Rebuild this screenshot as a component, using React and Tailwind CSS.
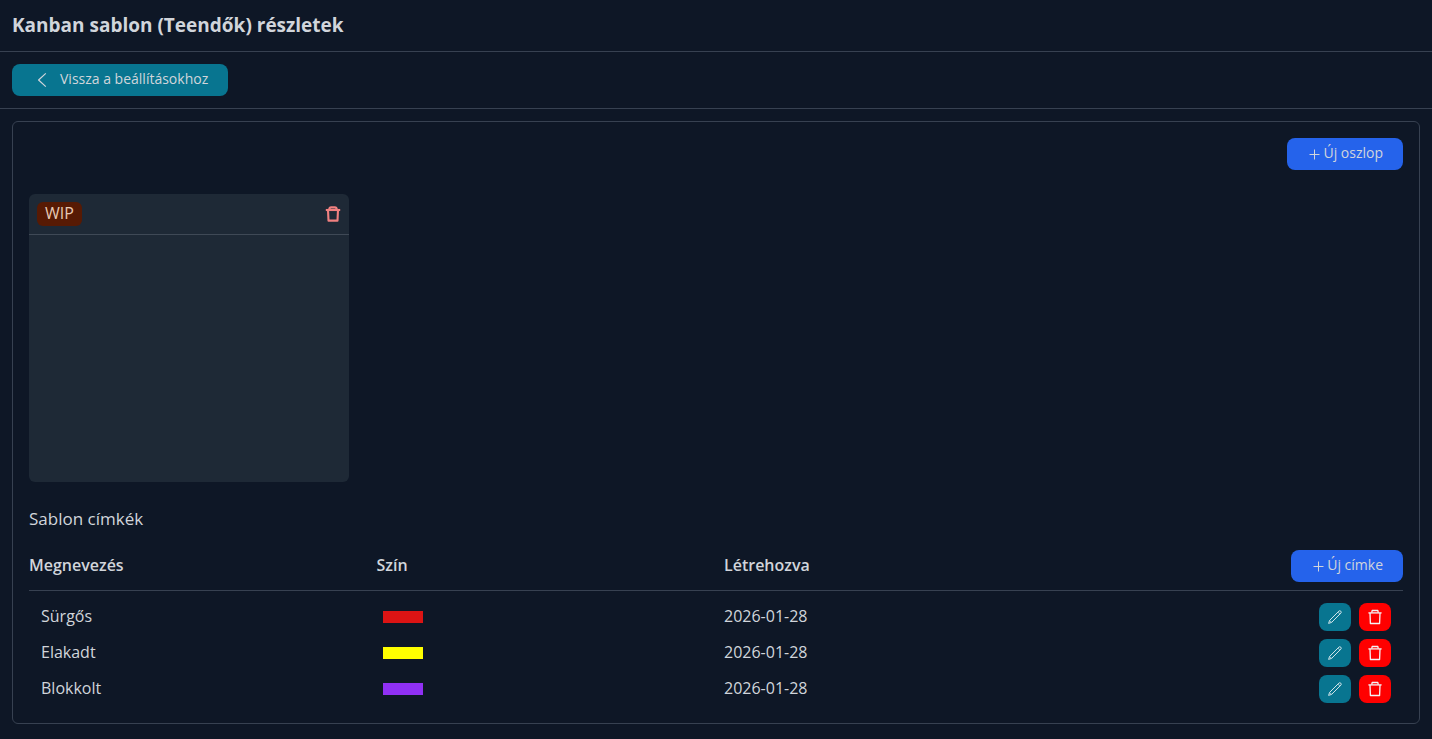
const labels = [
  { name: "Sürgős", color: "bg-[#dc1414]", created: "2026-01-28" },
  { name: "Elakadt", color: "bg-[#ffff00]", created: "2026-01-28" },
  { name: "Blokkolt", color: "bg-[#9030f4]", created: "2026-01-28" },
];

function Icon({ width = 1, children }) {
  return (
    <svg
      className="size-4 shrink-0"
      viewBox="0 0 16 16"
      fill="none"
      stroke="currentColor"
      strokeWidth={width}
      strokeLinejoin="round"
      aria-hidden="true"
    >
      {children}
    </svg>
  );
}

function ChevronIcon() {
  return (
    <Icon width={1.2}>
      <path d="M11.8 1.4 L4.6 8 L11.8 14.6" />
    </Icon>
  );
}

function PlusIcon() {
  return (
    <Icon>
      <path d="M7.5 3.5 V13.5 M2.5 8.5 H12.5" />
    </Icon>
  );
}

function TrashIcon() {
  return (
    <Icon width={1.3}>
      <path d="M1.4 3.9 H14.6" />
      <path d="M4.7 3.6 L5.2 1.5 H10.8 L11.3 3.6" />
      <path d="M3 4 L3.4 14.5 H12.6 L13 4" />
    </Icon>
  );
}

function BoldTrashIcon() {
  return (
    <Icon width={2.1}>
      <path d="M0.8 4 H15.2" />
      <path d="M4.2 3.6 Q4.4 1.4 6.2 1.4 H9.8 Q11.6 1.4 11.8 3.6" />
      <path d="M3 4 L3.5 14.6 H12.5 L13 4" />
    </Icon>
  );
}

function PencilIcon() {
  return (
    <Icon>
      <path d="M1.6 14.4 L2.6 11.4 L11.9 2.1 Q12.8 1.3 13.8 2.2 Q14.7 3.2 13.9 4.1 L4.6 13.4 Z" />
      <path d="M10.9 3.1 L12.9 5.1 M2.6 11.4 L4.6 13.4" strokeWidth="0.8" />
    </Icon>
  );
}

function AddButton({ children }) {
  return (
    <button
      type="button"
      className="inline-flex h-8 items-center rounded-lg bg-[#2563eb] px-5 text-sm text-[#d1d5db]"
    >
      <PlusIcon />
      <span className="pb-0.5">{children}</span>
    </button>
  );
}

function LabelRow({ label }) {
  return (
    <tr className="grid h-9 grid-cols-4 items-center gap-4">
      <td className="pb-0.5 pl-3">{label.name}</td>
      <td className="pl-1.5">
        <div className={`h-3 w-10 ${label.color}`} />
      </td>
      <td className="pb-0.5">{label.created}</td>
      <td className="flex justify-end gap-2 pr-3">
        <button
          type="button"
          aria-label="Szerkesztés"
          className="flex h-7 w-8 items-center justify-center rounded-lg bg-[#087590] text-[#d1e5ea]"
        >
          <PencilIcon />
        </button>
        <button
          type="button"
          aria-label="Törlés"
          className="flex h-7 w-8 items-center justify-center rounded-lg bg-[#ff0000] text-[#f3f4f6]"
        >
          <TrashIcon />
        </button>
      </td>
    </tr>
  );
}

export default function App() {
  return (
    <div className="min-h-screen bg-[#0e1726] font-['Open_Sans','Noto_Sans',sans-serif] text-base text-[#d1d5db]">
      <header className="border-b border-[#374151] px-3 pt-[11px] pb-3">
        <h1 className="text-[19px] leading-7 font-bold">Kanban sablon (Teendők) részletek</h1>
      </header>
      <nav className="flex border-b border-[#374151] p-3">
        <a
          href="#settings"
          className="inline-flex h-8 items-center gap-2.5 rounded-lg bg-[#087590] pr-5 pl-[22px] text-sm"
        >
          <ChevronIcon />
          <span className="pb-0.5">Vissza a beállításokhoz</span>
        </a>
      </nav>
      <main className="m-3 mb-0 rounded-md border border-[#374151] p-4">
        <div className="flex justify-end">
          <AddButton>Új oszlop</AddButton>
        </div>
        <section className="mt-6 h-72 w-80 rounded-md bg-[#1e2936]">
          <div className="flex h-[41px] items-center justify-between border-b border-[#3f4956] px-2">
            <h2 className="rounded-md bg-[#571a04] px-2 pb-0.5 leading-[22px] text-[#e8c9b4]">WIP</h2>
            <button type="button" aria-label="Oszlop törlése" className="text-[#f08080]">
              <BoldTrashIcon />
            </button>
          </div>
        </section>
        <h2 className="mt-6 mb-4 pb-0.5 text-[17px] leading-[26px]">Sablon címkék</h2>
        <table className="block w-full text-left">
          <thead className="block border-b border-[#374151] pb-2">
            <tr className="grid grid-cols-4 items-center gap-4">
              <th className="pb-0.5 font-semibold">Megnevezés</th>
              <th className="pb-0.5 font-semibold">Szín</th>
              <th className="pb-0.5 font-semibold">Létrehozva</th>
              <td className="flex justify-end">
                <AddButton>Új címke</AddButton>
              </td>
            </tr>
          </thead>
          <tbody className="block pt-2">
            {labels.map((label) => (
              <LabelRow key={label.name} label={label} />
            ))}
          </tbody>
        </table>
      </main>
    </div>
  );
}
